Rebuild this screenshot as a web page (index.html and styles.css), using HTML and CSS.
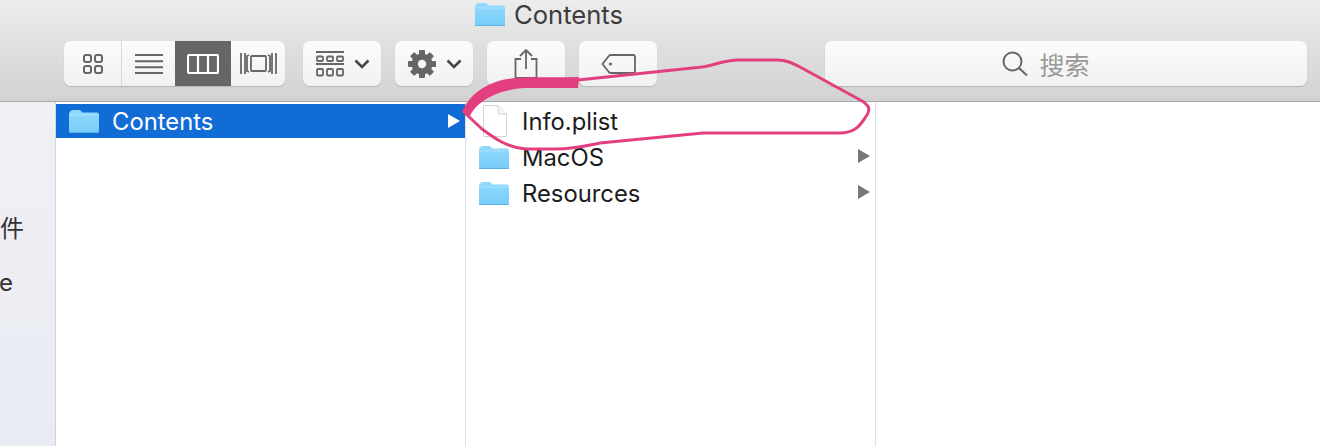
FILE: index.html
```html
<!DOCTYPE html>
<html lang="zh">
  <head>
    <meta charset="UTF-8" />
    <title>Contents</title>
    <link rel="stylesheet" href="styles.css">
  </head>
  <body>
    <svg width="0" height="0" class="defs">
      <defs>
        <linearGradient id="folderFill" x1="0" y1="0" x2="0" y2="1">
          <stop offset="0" stop-color="#92dafd" />
          <stop offset="1" stop-color="#76ccf8" />
        </linearGradient>
        <symbol id="folder" viewBox="0 0 30 24">
          <path d="M1 3.500C1 2 2 1 3.500 1h6.500c1.200 0 1.800.5 2.500 1.500l.7 1H28c1 0 2 1 2 2V22c0 1.200-1 2-2 2H2c-1 0-2-.8-2-2V3.500z" fill="url(#folderFill)" />
          <path d="M0 6h30" stroke="#a6e2fe" stroke-width="1" />
          <path d="M0 23.500h30" stroke="#5cb4e6" stroke-width="1" />
        </symbol>
        <symbol id="chevron" viewBox="0 0 16 10">
          <path d="M1.500 1.500 8 8l6.500-6.500" fill="none" stroke="#444" stroke-width="2.600" />
        </symbol>
      </defs>
    </svg>

    <div class="toolbar">
      <div class="title">
        <svg class="folder-icon"><use href="#folder" /></svg>
        <span>Contents</span>
      </div>
      <div class="tools">
        <div class="btn-group">
          <div class="seg seg-icons">
            <svg width="22" height="22" viewBox="0 0 22 22" fill="none" stroke="#666" stroke-width="2">
              <rect x="2" y="2" width="7" height="7" rx="2" />
              <rect x="13" y="2" width="7" height="7" rx="2" />
              <rect x="2" y="13" width="7" height="7" rx="2" />
              <rect x="13" y="13" width="7" height="7" rx="2" />
            </svg>
          </div>
          <div class="seg seg-list">
            <svg width="28" height="20" viewBox="0 0 28 20" stroke="#666" stroke-width="2">
              <path d="M0 1h28M0 7.300h28M0 13.300h28M0 19h28" />
            </svg>
          </div>
          <div class="seg seg-active">
            <svg width="32" height="20" viewBox="0 0 32 20" fill="none" stroke="#fff" stroke-width="2.200">
              <rect x="1" y="1" width="30" height="18" rx="1.500" />
              <path d="M11 1v18M21 1v18" />
            </svg>
          </div>
          <div class="seg">
            <svg width="37" height="23" viewBox="0 0 37 23" fill="none" stroke="#666" stroke-width="1.800">
              <rect x="11" y="4" width="15" height="15" rx="1" />
              <path d="M1 1v21M5 1v21M9 3l-2 1v15l2 1M36 1v21M32 1v21M28 3l2 1v15l-2 1" />
            </svg>
          </div>
        </div>

        <div class="btn btn-menu">
          <svg width="28" height="26" viewBox="0 0 28 26" fill="none" stroke="#666" stroke-width="1.800">
            <path d="M0 1h28M0 13h28" stroke-width="2" />
            <rect x="1" y="5.500" width="6" height="4.500" rx="1" />
            <rect x="11" y="5.500" width="6" height="4.500" rx="1" />
            <rect x="21" y="5.500" width="6" height="4.500" rx="1" />
            <rect x="1" y="18" width="6" height="6.500" rx="1" />
            <rect x="11" y="18" width="6" height="6.500" rx="1" />
            <rect x="21" y="18" width="6" height="6.500" rx="1" />
          </svg>
          <svg class="chevron"><use href="#chevron" /></svg>
        </div>

        <div class="btn btn-menu">
          <svg width="28" height="28" viewBox="0 0 28 28">
            <g fill="#666">
              <circle cx="14" cy="14" r="10.500" />
              <rect x="11" y="0" width="6" height="28" rx="1" />
              <rect x="0" y="11" width="28" height="6" rx="1" />
              <rect x="11" y="0" width="6" height="28" rx="1" transform="rotate(45 14 14)" />
              <rect x="11" y="0" width="6" height="28" rx="1" transform="rotate(-45 14 14)" />
            </g>
            <circle cx="14" cy="14" r="4.200" fill="#f6f6f6" />
          </svg>
          <svg class="chevron"><use href="#chevron" /></svg>
        </div>

        <div class="btn">
          <svg width="24" height="30" viewBox="0 0 24 30" fill="none" stroke="#666" stroke-width="1.800">
            <path d="M7 10H1.500v19h21V10H17" />
            <path d="M12 20V1.500M6 7l6-6 6 6" />
          </svg>
        </div>

        <div class="btn">
          <svg width="35" height="20" viewBox="0 0 35 20" fill="none" stroke="#666" stroke-width="1.800">
            <path d="M10 1h22c1 0 2 1 2 2v14c0 1-1 2-2 2H10c-1 0-1.600-.4-2.200-1L1.500 10l6.300-8c.6-.7 1.200-1 2.200-1z" />
            <circle cx="9.500" cy="10" r="1.600" fill="#666" stroke="none" />
          </svg>
        </div>

        <div class="search">
          <svg width="26" height="25" viewBox="0 0 26 25" fill="none" stroke="#666" stroke-width="2">
            <circle cx="10.500" cy="10.500" r="9" />
            <path d="m17 17 8 7.500" />
          </svg>
          <span>搜索</span>
        </div>
      </div>
    </div>

    <div class="browser">
      <div class="sidebar">
        <div class="side-item side-item-first">文件</div>
        <div class="side-item">Home</div>
      </div>

      <div class="column">
        <div class="row selected">
          <svg class="folder-icon"><use href="#folder" /></svg>
          <span class="name">Contents</span>
          <span class="arrow"></span>
        </div>
      </div>

      <div class="column column-files">
        <div class="row">
          <svg class="folder-icon file-icon" viewBox="0 0 30 32">
            <path d="M4.500 .5H19L27.500 9v22.500h-23z" fill="#fff" stroke="#d4d4d4" />
            <path d="M19 .5V9h8.500" fill="#f4f4f4" stroke="#d4d4d4" />
          </svg>
          <span class="name">Info.plist</span>
        </div>
        <div class="row">
          <svg class="folder-icon"><use href="#folder" /></svg>
          <span class="name">MacOS</span>
          <span class="arrow"></span>
        </div>
        <div class="row">
          <svg class="folder-icon"><use href="#folder" /></svg>
          <span class="name">Resources</span>
          <span class="arrow"></span>
        </div>
      </div>
    </div>

    <!-- hand drawn circle around Info.plist -->
    <svg class="scribble" width="1320" height="446" viewBox="0 0 1320 446">
      <path d="M578 80 702 67C716 65 724 60 738 60H778C786 60 792 63 800 67L862 101C870 106 870 110 867 115 862 122 858 132 842 133H703L600 143C585 146 572 149 556 149H526C508 148 494 138 482 129L466 114" fill="none" stroke="#e33f7f" stroke-width="3" stroke-linejoin="round" stroke-linecap="round" />
      <path d="M462 112C468 98 480 86 502 80 522 76 550 78 579 77L578 88H525C508 89 492 94 482 102 476 106 472 111 469 118z" fill="#e33f7f" />
    </svg>
  </body>
</html>
```

FILE: styles.css
```css
html, body {
  margin: 0;
  height: 100%;
}

body {
  position: relative;
  width: 1320px;
  height: 446px;
  overflow: hidden;
  font-family: Inter, "Noto Sans CJK SC", sans-serif;
  background: white;
}

.defs {
  display: block;
}

.toolbar {
  height: 101px;
  border-bottom: 1px solid #a9a7a8;
  background: linear-gradient(180deg, #ececec 0%, #d2d2d2 100%);
}

.title {
  display: flex;
  align-items: center;
  height: 28px;
  padding-left: 475px;
  font-size: 25.6px;
  color: #3c3c3c;
}

.title span {
  margin-left: 9px;
}

.folder-icon {
  width: 30px;
  height: 24px;
  flex-shrink: 0;
}

.tools {
  display: flex;
  gap: 14px;
  padding: 13px 0 0 64px;
}

.btn-group,
.btn,
.search {
  height: 45px;
  box-sizing: border-box;
  border-radius: 7px;
  background: linear-gradient(180deg, #fcfcfc 0%, #f1f1f1 100%);
  box-shadow: 0 1px 1px #b4b4b4;
}

.btn-group {
  display: flex;
  width: 221px;
  margin-right: 4px;
  overflow: hidden;
}

.seg {
  display: flex;
  align-items: center;
  justify-content: center;
  width: 54px;
}

.seg-icons {
  width: 57px;
  border-right: 1px solid #d6d6d6;
}

.seg-list {
  width: 53px;
}

.seg-active {
  width: 56px;
  background: #666;
}

.btn {
  display: flex;
  align-items: center;
  justify-content: center;
  gap: 10px;
  width: 78px;
}

.btn-menu {
  justify-content: flex-start;
  padding-left: 13px;
}

.chevron {
  width: 16px;
  height: 10px;
}

.search {
  display: flex;
  align-items: center;
  justify-content: center;
  gap: 11px;
  width: 482px;
  margin-left: 154px;
  padding-right: 40px;
  font-size: 25px;
  color: #999;
}

.browser {
  display: flex;
  height: 344px;
}

.sidebar {
  width: 55px;
  border-right: 1px solid #d3d3d8;
  background: linear-gradient(180deg, #f0f1f5 0%, #e9ebf3 100%);
  font-size: 24px;
  color: #333;
}

.side-item {
  display: flex;
  justify-content: flex-end;
  width: 24px;
  height: 54px;
  line-height: 52px;
  white-space: nowrap;
}

.side-item-first {
  margin-top: 101px;
}

.side-item:last-child {
  width: 13px;
}

.column {
  width: 409px;
  padding-top: 2px;
  border-right: 1px solid #d9dfe6;
}

.column-files {
  padding-top: 1px;
}

.row {
  display: flex;
  align-items: center;
  gap: 13px;
  height: 36px;
  padding: 0 5px 0 13px;
  font-size: 23.8px;
  color: #1c1c1c;
}

.row.selected {
  height: 34px;
  margin-bottom: 2px;
  background: #116cd6;
  color: white;
}

.file-icon {
  height: 32px;
  margin-top: -1px;
}

.arrow {
  margin: -3px 0 0 auto;
  border-left: 12px solid #777;
  border-top: 7.500px solid transparent;
  border-bottom: 7.500px solid transparent;
}

.selected .arrow {
  border-left-color: white;
  margin-top: 0;
}

.scribble {
  position: absolute;
  top: 0;
  left: 0;
}
```
